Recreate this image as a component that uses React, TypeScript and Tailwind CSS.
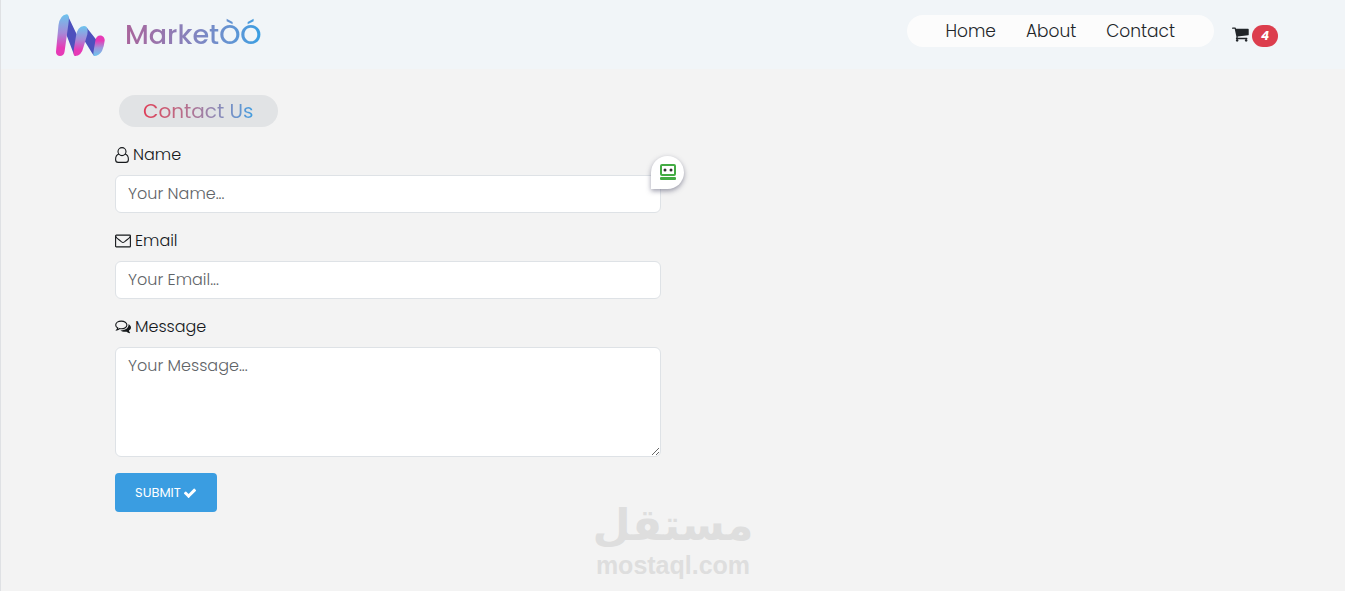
import React, { useState } from 'react';

interface IconProps {
  className?: string;
}

const CartIcon: React.FC<IconProps> = ({ className }) => (
  <svg viewBox="0 0 1792 1792" fill="currentColor" className={className} aria-hidden="true">
    <path d="M640 1536q0 52-38 90t-90 38-90-38-38-90 38-90 90-38 90 38 38 90zm896 0q0 52-38 90t-90 38-90-38-38-90 38-90 90-38 90 38 38 90zm128-1088v512q0 24-16.5 42.5t-40.5 21.5l-1044 122q13 60 13 70 0 16-24 64h920q26 0 45 19t19 45-19 45-45 19h-1024q-26 0-45-19t-19-45q0-11 8-31.5t16-36 21.5-40 15.5-29.5l-177-823h-204q-26 0-45-19t-19-45 19-45 45-19h256q16 0 28.5 6.5t19.5 15.5 13 24.5 8 26 5.5 29.5 4.5 26h1201q26 0 45 19t19 45z" />
  </svg>
);

const CheckIcon: React.FC<IconProps> = ({ className }) => (
  <svg viewBox="0 0 1792 1792" fill="currentColor" className={className} aria-hidden="true">
    <path d="M1671 566q0 40-28 68l-724 724-136 136q-28 28-68 28t-68-28l-136-136-362-362q-28-28-28-68t28-68l136-136q28-28 68-28t68 28l294 295 656-657q28-28 68-28t68 28l136 136q28 28 28 68z" />
  </svg>
);

const UserIcon: React.FC = () => (
  <svg width="14" height="16" viewBox="0 0 14 16" fill="none" stroke="currentColor" strokeWidth="1.1" aria-hidden="true">
    <circle cx="7" cy="4.6" r="4" />
    <path d="M3.8 7.2C1.6 7.6.6 9.6.6 12.4c0 1.8 1 3 2.6 3h7.6c1.6 0 2.6-1.2 2.6-3 0-2.8-1-4.8-3.2-5.2" />
  </svg>
);

const EnvelopeIcon: React.FC = () => (
  <svg width="16" height="14" viewBox="0 0 16 14" fill="none" stroke="currentColor" strokeWidth="1.1" aria-hidden="true">
    <rect x=".6" y="1.1" width="14.8" height="11.8" rx=".7" />
    <path d="M.8 2.4c.4 1.4 1.5 2.1 2.6 2.9L6.3 7.6c.7.5 1.1.9 1.7.9s1-.4 1.7-.9l2.9-2.3c1.1-.8 2.2-1.5 2.6-2.9" />
  </svg>
);

const CommentsIcon: React.FC = () => (
  <svg width="16" height="14" viewBox="0 0 16 14" aria-hidden="true">
    <path
      d="M6.3 1.1C3.2 1.1.7 2.8.7 5c0 1.3.8 2.3 2.1 3-.2.8-.5 1.3-1 1.9 1.1-.2 2-.7 2.7-1.3.6.2 1.2.2 1.8.2 3.1 0 5.6-1.7 5.6-3.8S9.4 1.1 6.3 1.1z"
      fill="none"
      stroke="currentColor"
      strokeWidth="1.1"
    />
    <path
      d="M13.3 4.2C15 4.9 16 6.1 16 7.5c0 1.3-.8 2.4-2.1 3.1.2.9.6 1.4 1.2 2.1.1.2 0 .5-.3.5-1.2-.1-2.3-.7-3.2-1.5-2.4.4-4.8-.1-6.3-1.3 4.3.2 8-1.9 8.2-5.1z"
      fill="currentColor"
    />
  </svg>
);

const Logo: React.FC = () => (
  <svg width="50" height="44" viewBox="0 0 50 44" aria-hidden="true">
    <defs>
      <linearGradient id="down" x1="0" y1="0" x2="0" y2="1">
        <stop offset="0" stopColor="#6cc4ee" />
        <stop offset=".45" stopColor="#a58ad8" />
        <stop offset=".8" stopColor="#e63ab6" />
      </linearGradient>
      <linearGradient id="up" x1="0" y1="0" x2="0" y2="1">
        <stop offset="0" stopColor="#e63ab6" />
        <stop offset=".25" stopColor="#e63ab6" />
        <stop offset=".6" stopColor="#9d96dc" />
        <stop offset="1" stopColor="#6cc4ee" />
      </linearGradient>
    </defs>
    <path d="M12.5 2 22 22 21 43q-1.5 0-3-4L11.5 22z" fill="#4d50bd" />
    <path d="M32 15 41.5 27 40 43q-1.5 0-3-3L29 27z" fill="#4d50bd" />
    <path d="M1 38.5 3.5 12Q5 2 11.5 1.2C14.5 1.3 14 6 13.4 11L9.6 38.5C9.2 44.5.6 44.5 1 38.5z" fill="url(#down)" />
    <path d="M20 43q-2-.2-1.3-6L21 23q1.3-9.5 8-10c4 .2 4 4 3.3 8.5L28.5 34q-2 9-8.5 9z" fill="url(#down)" />
    <path d="M39 43q-1.2-.5-.2-6l1.6-9.5c1-7.5 9.6-5.5 9.3 0Q49 34 47 38q-3 5-8 5z" fill="url(#up)" />
  </svg>
);

const RobotIcon: React.FC = () => (
  <svg width="16" height="17" viewBox="0 0 16 17" aria-hidden="true">
    <rect x="1" y="1" width="14" height="10" rx="1" fill="#fff" stroke="#43ab43" strokeWidth="2" />
    <circle cx="5" cy="6" r="1.5" fill="#333" />
    <circle cx="11" cy="6" r="1.5" fill="#333" />
    <rect y="13" width="16" height="3" rx="1" fill="#43ab43" />
  </svg>
);

const fieldStyle =
  'block w-full rounded-md border border-[#dee2e6] bg-white px-3 py-[6px] text-base text-[#212529] placeholder:text-[#5f6468]';
const labelStyle = 'mb-2 flex h-6 items-center gap-1 text-base text-[#15181b]';

const ContactForm: React.FC = () => {
  const [formData, setFormData] = useState({ name: '', email: '', message: '' });

  const handleChange = (e: React.ChangeEvent<HTMLInputElement | HTMLTextAreaElement>) => {
    const { name, value } = e.target;
    setFormData(prev => ({ ...prev, [name]: value }));
  };

  const handleSubmit = (e: React.FormEvent) => {
    e.preventDefault();
  };

  return (
    <form onSubmit={handleSubmit} className="w-1/2 pr-3">
      <div className="mb-4">
        <label htmlFor="name" className={labelStyle}>
          <UserIcon />
          Name
        </label>
        <div className="relative">
          <input
            id="name"
            name="name"
            type="text"
            placeholder="Your Name..."
            value={formData.name}
            onChange={handleChange}
            className={fieldStyle}
          />
          <span className="absolute -top-[19px] -right-[23px] flex size-[33px] items-center justify-center rounded-full rounded-bl-none bg-white shadow-[0_2px_5px_rgba(60,60,90,0.5)]">
            <RobotIcon />
          </span>
        </div>
      </div>

      <div className="mb-4">
        <label htmlFor="email" className={labelStyle}>
          <EnvelopeIcon />
          Email
        </label>
        <input
          id="email"
          name="email"
          type="email"
          placeholder="Your Email..."
          value={formData.email}
          onChange={handleChange}
          className={fieldStyle}
        />
      </div>

      <div className="mb-4">
        <label htmlFor="message" className={labelStyle}>
          <CommentsIcon />
          Message
        </label>
        <textarea
          id="message"
          name="message"
          rows={4}
          placeholder="Your Message..."
          value={formData.message}
          onChange={handleChange}
          className={`${fieldStyle} resize-y`}
        />
      </div>

      <button
        type="submit"
        className="flex items-center gap-[2px] rounded bg-[#3a9de1] px-5 py-[10px] text-[13px] leading-[19px] font-normal text-white"
      >
        SUBMIT
        <CheckIcon className="size-[14px]" />
      </button>
    </form>
  );
};

const Header: React.FC = () => (
  <header className="flex h-[69px] items-start justify-between bg-[#f1f5f8] pr-[67px] pl-[54px]">
    <a href="#" className="flex items-center gap-5 pt-[13px]">
      <Logo />
      <span className="bg-linear-to-r from-[#a9649b] to-[#349fe3] bg-clip-text text-[27px] leading-10 font-medium text-transparent">
        MarketÒÓ
      </span>
    </a>
    <div className="flex items-start gap-[18px] pt-[15px]">
      <nav className="flex h-8 items-center gap-[30px] rounded-full bg-[#fcfcfc] px-[39px] pt-[2px] text-[17px] text-[#212529]">
        <a href="#home">Home</a>
        <a href="#about">About</a>
        <a href="#contact">Contact</a>
      </nav>
      <a href="#cart" className="flex items-start gap-[2px] pt-[10px] text-[#212529]">
        <CartIcon className="size-[18px]" />
        <span className="flex h-[22px] w-[26px] items-center justify-center rounded-full bg-[#dc3d4d] text-xs font-bold text-white italic">
          4
        </span>
      </a>
    </div>
  </header>
);

const App: React.FC = () => (
  <div className="relative min-h-screen border-l border-[#dfe1e4] bg-[#f3f3f3] font-[Poppins,Inter,sans-serif] font-light">
    <Header />
    <main className="mx-auto max-w-[1140px] px-3 pt-[26px]">
      <h1 className="mb-4 ml-1 w-fit rounded-full bg-[#e1e3e5] px-6">
        <span className="block bg-linear-to-r from-[#df3a56] to-[#3a9de1] bg-clip-text text-xl leading-8 font-normal text-transparent">
          Contact Us
        </span>
      </h1>
      <ContactForm />
    </main>

    {/* watermark */}
    <div className="pointer-events-none absolute inset-x-0 bottom-[11px] flex flex-col items-center font-bold text-[#dedede]">
      <span lang="ar" dir="rtl" className="font-['DejaVu_Sans',sans-serif] text-[44px] leading-[52px]">
        مستقل
      </span>
      <span className="font-['Liberation_Sans',sans-serif] text-[25px] leading-[29px]">mostaql.com</span>
    </div>
  </div>
);

export default App;
